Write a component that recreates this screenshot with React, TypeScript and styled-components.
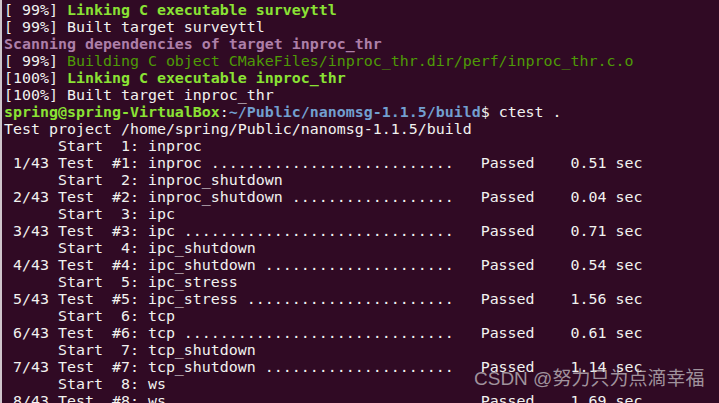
import React from "react";
import styled, { createGlobalStyle } from "styled-components";

const Global = createGlobalStyle`
  html, body { margin: 0; padding: 0; background: #300a24; overflow: hidden; }
  #root { width: 719px; height: 403px; }
`;

const Terminal = styled.div`
  position: relative;
  box-sizing: border-box;
  width: 719px;
  height: 403px;
  overflow: hidden;
  background: #300a24;
  border-left: 2px solid #cfc6cc;
  padding: 2px 0 0 2px;
  font-family: "DejaVu Sans Mono", "Liberation Mono", monospace;
  font-size: 14.95px;
  color: #f2f2f0;
  display: flex;
  flex-direction: column;
`;

const Line = styled.div`
  height: 17px;
  line-height: 17px;
  white-space: pre;
`;

type Tone = "plain" | "bgreen" | "green" | "purple" | "blue";

const colors: Record<Tone, string> = {
  plain: "#f2f2f0",
  bgreen: "#8ae234",
  green: "#4e9a06",
  purple: "#ad7fa8",
  blue: "#729fcf",
};

const Seg = styled.span<{ $tone: Tone; $bold?: boolean }>`
  color: ${(p) => colors[p.$tone]};
  font-weight: ${(p) => (p.$bold ? 700 : 400)};
`;

const Watermark = styled.div`
  position: absolute;
  left: 472px;
  top: 367px;
  font-family: "Liberation Sans", "Noto Sans CJK SC", sans-serif;
  font-size: 19px;
  line-height: 24px;
  color: rgba(205, 200, 204, 0.72);
  white-space: nowrap;
`;

const tests: [string, string][] = [
  ["inproc", "0.51"],
  ["inproc_shutdown", "0.04"],
  ["ipc", "0.71"],
  ["ipc_shutdown", "0.54"],
  ["ipc_stress", "1.56"],
  ["tcp", "0.61"],
  ["tcp_shutdown", "1.14"],
  ["ws", "1.69"],
];

function testLine(i: number, name: string, t: string) {
  let seg = name + " ";
  while (seg.length < 34) seg += ".";
  return ` ${i}/43 Test  #${i}: ${seg}   Passed    ${t} sec`;
}

export default function App() {
  return (
    <>
      <Global />
      <Terminal>
        <Line>
          <Seg $tone="plain">[ 99%] </Seg>
          <Seg $tone="bgreen" $bold>Linking C executable surveyttl</Seg>
        </Line>
        <Line>
          <Seg $tone="plain">[ 99%] Built target surveyttl</Seg>
        </Line>
        <Line>
          <Seg $tone="purple" $bold>Scanning dependencies of target inproc_thr</Seg>
        </Line>
        <Line>
          <Seg $tone="plain">[ 99%] </Seg>
          <Seg $tone="green">Building C object CMakeFiles/inproc_thr.dir/perf/inproc_thr.c.o</Seg>
        </Line>
        <Line>
          <Seg $tone="plain">[100%] </Seg>
          <Seg $tone="bgreen" $bold>Linking C executable inproc_thr</Seg>
        </Line>
        <Line>
          <Seg $tone="plain">[100%] Built target inproc_thr</Seg>
        </Line>
        <Line>
          <Seg $tone="bgreen" $bold>spring@spring-VirtualBox</Seg>
          <Seg $tone="plain">:</Seg>
          <Seg $tone="blue" $bold>~/Public/nanomsg-1.1.5/build</Seg>
          <Seg $tone="plain">$ ctest .</Seg>
        </Line>
        <Line>
          <Seg $tone="plain">Test project /home/spring/Public/nanomsg-1.1.5/build</Seg>
        </Line>
        {tests.map(([name, t], idx) => (
          <React.Fragment key={name}>
            <Line>
              <Seg $tone="plain">{`      Start  ${idx + 1}: ${name}`}</Seg>
            </Line>
            <Line>
              <Seg $tone="plain">{testLine(idx + 1, name, t)}</Seg>
            </Line>
          </React.Fragment>
        ))}
        <Watermark>CSDN @努力只为点滴幸福</Watermark>
      </Terminal>
    </>
  );
}
